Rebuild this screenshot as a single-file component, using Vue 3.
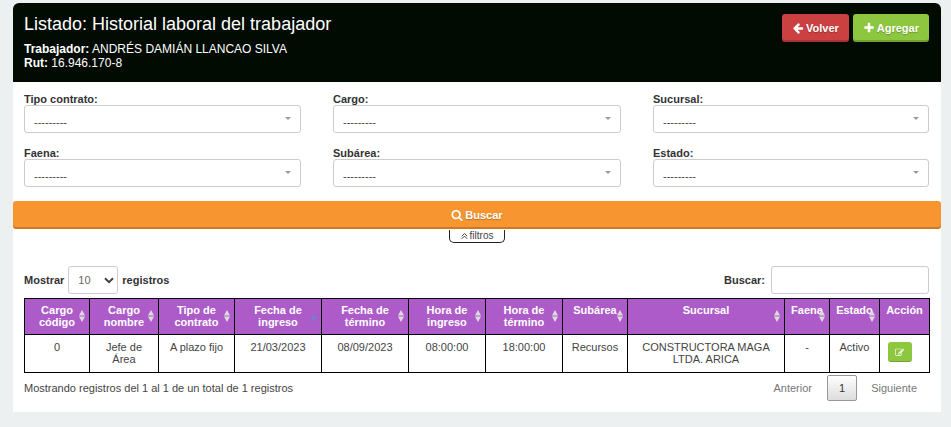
<script setup>
import { ref } from 'vue'

const filters = [
  { id: 'tipo', label: 'Tipo contrato:' },
  { id: 'cargo', label: 'Cargo:' },
  { id: 'sucursal', label: 'Sucursal:' },
  { id: 'faena', label: 'Faena:' },
  { id: 'subarea', label: 'Subárea:' },
  { id: 'estado', label: 'Estado:' },
]

const columns = [
  { label: 'Cargo código', weight: 65, sort: 'both' },
  { label: 'Cargo nombre', weight: 69, sort: 'both' },
  { label: 'Tipo de contrato', weight: 76, sort: 'both' },
  { label: 'Fecha de ingreso', weight: 87, sort: 'desc' },
  { label: 'Fecha de término', weight: 87, sort: 'both' },
  { label: 'Hora de ingreso', weight: 77, sort: 'both' },
  { label: 'Hora de término', weight: 77, sort: 'both' },
  { label: 'Subárea', weight: 65, sort: 'both' },
  { label: 'Sucursal', weight: 157, sort: 'both' },
  { label: 'Faena', weight: 45, sort: 'both' },
  { label: 'Estado', weight: 50, sort: 'both' },
  { label: 'Acción', weight: 50, sort: '' },
]
const total = columns.reduce((sum, c) => sum + c.weight, 0)

const rows = [
  ['0', 'Jefe de Área', 'A plazo fijo', '21/03/2023', '08/09/2023', '08:00:00', '18:00:00', 'Recursos', 'CONSTRUCTORA MAGA LTDA. ARICA', '-', 'Activo'],
]

const pageSize = ref('10')
const query = ref('')
</script>

<template>
  <main class="panel">
    <header class="head">
      <div>
        <h1>Listado: Historial laboral del trabajador</h1>
        <p><strong>Trabajador:</strong> ANDRÉS DAMIÁN LLANCAO SILVA</p>
        <p><strong>Rut:</strong> 16.946.170-8</p>
      </div>
      <div class="actions">
        <button type="button" class="btn red">
          <svg class="icon" viewBox="0 0 1792 1792" aria-hidden="true"><path d="M1664 896v128q0 53-32.5 90.5t-84.5 37.5h-704l293 294q38 36 38 90t-38 90l-75 76q-37 37-90 37-52 0-91-37l-651-652q-37-37-37-90 0-52 37-91l651-650q38-38 91-38 52 0 90 38l75 74q38 38 38 91t-38 91l-293 293h704q52 0 84.5 37.5t32.5 90.5z" /></svg>
          Volver
        </button>
        <button type="button" class="btn green">
          <svg class="icon" viewBox="0 0 1792 1792" aria-hidden="true"><path d="M1600 736v192q0 40-28 68t-68 28h-416v416q0 40-28 68t-68 28h-192q-40 0-68-28t-28-68v-416h-416q-40 0-68-28t-28-68v-192q0-40 28-68t68-28h416v-416q0-40 28-68t68-28h192q40 0 68 28t28 68v416h416q40 0 68 28t28 68z" /></svg>
          Agregar
        </button>
      </div>
    </header>

    <form @submit.prevent>
      <div class="filters">
        <div v-for="f in filters" :key="f.id" class="field">
          <label :for="f.id">{{ f.label }}</label>
          <div class="picker">
            <select :id="f.id"><option>---------</option></select>
          </div>
        </div>
      </div>
      <button type="submit" class="btn orange">
        <svg class="icon" viewBox="0 0 1792 1792" aria-hidden="true"><path d="M1216 832q0-185-131.5-316.5t-316.5-131.5-316.5 131.5-131.5 316.5 131.5 316.5 316.5 131.5 316.5-131.5 131.5-316.5zm512 832q0 52-38 90t-90 38q-54 0-90-38l-343-342q-179 124-399 124-143 0-273.5-55.5t-225-150-150-225-55.5-273.5 55.5-273.5 150-225 225-150 273.5-55.5 273.5 55.5 225 150 150 225 55.5 273.5q0 220-124 399l343 343q37 37 37 90z" /></svg>
        Buscar
      </button>
    </form>
    <button type="button" class="toggle">
      <svg viewBox="0 0 7 8" aria-hidden="true"><path d="M.8 4.2 3.5 1.5 6.2 4.2M.8 6.8 3.5 4.1 6.2 6.8" /></svg>
      filtros
    </button>

    <section class="data">
      <div class="bar">
        <div class="length">
          <label for="size">Mostrar</label>
          <div class="size">
            <select id="size" v-model="pageSize">
              <option>10</option><option>25</option><option>50</option><option>100</option>
            </select>
            <svg viewBox="0 0 10 7" aria-hidden="true"><path d="M1 1.2 5 5.2 9 1.2" /></svg>
          </div>
          <label for="size">registros</label>
        </div>
        <div class="search">
          <label for="query">Buscar:</label>
          <input id="query" v-model="query" type="text">
        </div>
      </div>

      <table>
        <colgroup>
          <col v-for="c in columns" :key="c.label" :style="{ width: (c.weight / total) * 100 + '%' }">
        </colgroup>
        <thead>
          <tr>
            <th v-for="c in columns" :key="c.label" scope="col">
              {{ c.label }}
              <svg v-if="c.sort" class="sort" :class="c.sort" viewBox="0 0 6 12" aria-hidden="true">
                <path v-if="c.sort === 'both'" d="M0 5.5 3 0 6 5.5z" />
                <path d="M0 6.5 3 12 6 6.5z" />
              </svg>
            </th>
          </tr>
        </thead>
        <tbody>
          <tr v-for="row in rows" :key="row[0]">
            <td v-for="(cell, i) in row" :key="i">{{ cell }}</td>
            <td class="action">
              <button type="button" class="edit" aria-label="Editar">
                <svg viewBox="0 0 1792 1792" aria-hidden="true"><path d="M888 1184l116-116-152-152-116 116v56h96v96h56zm440-720q-16-16-33 1l-350 350q-17 17-1 33t33-1l350-350q17-17 1-33zm80 594v190q0 119-84.5 203.5t-203.5 84.5h-832q-119 0-203.5-84.5t-84.5-203.5v-832q0-119 84.5-203.5t203.5-84.5h832q63 0 117 25 15 7 18 23 3 17-9 29l-49 49q-14 14-32 8-23-6-45-6h-832q-66 0-113 47t-47 113v832q0 66 47 113t113 47h832q66 0 113-47t47-113v-126q0-13 9-22l64-64q15-15 35-7t20 29zm-96-738l288 288-672 672h-288v-288zm444 132l-92 92-288-288 92-92q28-28 68-28t68 28l152 152q28 28 28 68t-28 68z" /></svg>
              </button>
            </td>
          </tr>
        </tbody>
      </table>

      <div class="foot">
        <span>Mostrando registros del 1 al 1 de un total de 1 registros</span>
        <nav>
          <button type="button" class="page">Anterior</button>
          <button type="button" class="page current">1</button>
          <button type="button" class="page">Siguiente</button>
        </nav>
      </div>
    </section>
  </main>
</template>

<style>
body {
  background: #ecf0f1;
}
</style>

<style scoped>
.panel,
.panel * {
  box-sizing: border-box;
}
.panel {
  margin: 3px 10px 0 13px;
  background: #fff;
  border-radius: 6px 6px 0 0;
  font: 11px/12px "Liberation Sans", Arial, sans-serif;
  color: #444;
}
button,
select,
input {
  font: inherit;
  color: inherit;
  margin: 0;
}
label {
  font-weight: bold;
  color: #333;
}
.head {
  display: flex;
  justify-content: space-between;
  align-items: flex-start;
  padding: 11px 12px 12px 11px;
  background: #010b02;
  color: #fff;
  border-radius: 6px 6px 0 0;
}
h1 {
  margin: 0 0 8px;
  font-size: 18px;
  line-height: 20px;
  font-weight: normal;
}
p {
  margin: 0;
  font-size: 12px;
  line-height: 14px;
}
.actions {
  display: flex;
  gap: 4px;
}
.btn {
  display: flex;
  align-items: center;
  justify-content: center;
  gap: 2px;
  height: 28px;
  padding: 0 10px;
  border: 0;
  border-radius: 3px;
  font-weight: bold;
  color: #fff;
  text-shadow: 0 1px 1px rgba(0, 0, 0, 0.25);
  box-shadow: inset 0 -2px 0 rgba(0, 0, 0, 0.18);
}
.icon {
  width: 12px;
  height: 12px;
  fill: currentColor;
}
.red {
  background: #cb4040;
}
.green {
  background: #8dc63f;
}
.orange {
  width: 100%;
  background: #f79630;
}
.filters {
  display: grid;
  grid-template-columns: 277fr 288fr 276fr;
  gap: 14px 32px;
  padding: 11px 12px 14px 11px;
}
.field {
  display: flex;
  flex-direction: column;
  min-width: 0;
}
.picker {
  position: relative;
  display: flex;
}
.picker::after {
  content: "";
  position: absolute;
  right: 10px;
  top: 12px;
  border: 3px solid transparent;
  border-top-color: #999;
  border-bottom: 0;
}
.picker select {
  appearance: none;
  width: 100%;
  height: 28px;
  padding: 5px 9px 0;
  border: 1px solid #ccc;
  border-radius: 3px;
  background: #fff;
}
.toggle {
  display: flex;
  align-items: center;
  justify-content: center;
  gap: 2px;
  height: 13px;
  width: 56px;
  margin: 1px auto 0;
  padding: 0;
  border: 1px solid #222;
  border-top: 0;
  border-radius: 0 0 5px 5px;
  background: #fff;
  font-size: 10px;
}
.toggle svg {
  width: 7px;
  height: 8px;
  flex: none;
}
.toggle path,
.size path {
  fill: none;
  stroke: currentColor;
}
.data {
  padding: 23px 11px 11px;
}
.bar {
  display: flex;
  justify-content: space-between;
  margin-bottom: 4px;
}
.length,
.search {
  display: flex;
  align-items: center;
  gap: 4px;
}
.search {
  gap: 6px;
  padding-right: 1px;
}
.size {
  position: relative;
}
.size select {
  appearance: none;
  display: block;
  width: 50px;
  height: 28px;
  padding: 0 9px;
  border: 1px solid #ccc;
  border-radius: 3px;
  background: #fff;
  color: #666;
}
.size svg {
  position: absolute;
  right: 4px;
  top: 11px;
  width: 10px;
  height: 7px;
}
.size path {
  stroke-width: 2;
}
.search input {
  width: 158px;
  height: 28px;
  padding: 0 8px;
  border: 1px solid #ccc;
  border-radius: 3px;
}
table {
  width: 100%;
  table-layout: fixed;
  border-collapse: collapse;
}
th,
td {
  border: 1px solid #000;
  text-align: center;
  vertical-align: top;
}
th {
  position: relative;
  padding: 5px 4px 6px;
  background: #ad5bc8;
  color: #fff;
}
td {
  padding: 6px 5px 7px;
}
.sort {
  position: absolute;
  right: 4px;
  bottom: 12px;
  width: 6px;
  height: 12px;
  fill: #dcdcdc;
}
.sort.desc {
  fill: #7080e0;
}
td.action {
  padding: 7px 8px 0;
  text-align: left;
}
.edit {
  display: flex;
  align-items: center;
  justify-content: center;
  width: 24px;
  height: 20px;
  padding: 0;
  border: 0;
  border-radius: 3px;
  background: #8dc63f;
  box-shadow: inset 0 -1px 0 rgba(0, 0, 0, 0.18);
}
.edit svg {
  width: 9px;
  height: 9px;
  fill: #fff;
}
.foot {
  display: flex;
  justify-content: space-between;
  align-items: center;
  padding-top: 2px;
}
nav {
  display: flex;
  gap: 2px;
}
.page {
  height: 26px;
  padding: 0 13px 0 12px;
  border: 0;
  border-radius: 2px;
  background: none;
  color: #777;
}
.page.current {
  padding: 0 11px;
  border: 1px solid #979797;
  background: linear-gradient(#fff, #dcdcdc);
  color: #333;
}
</style>
